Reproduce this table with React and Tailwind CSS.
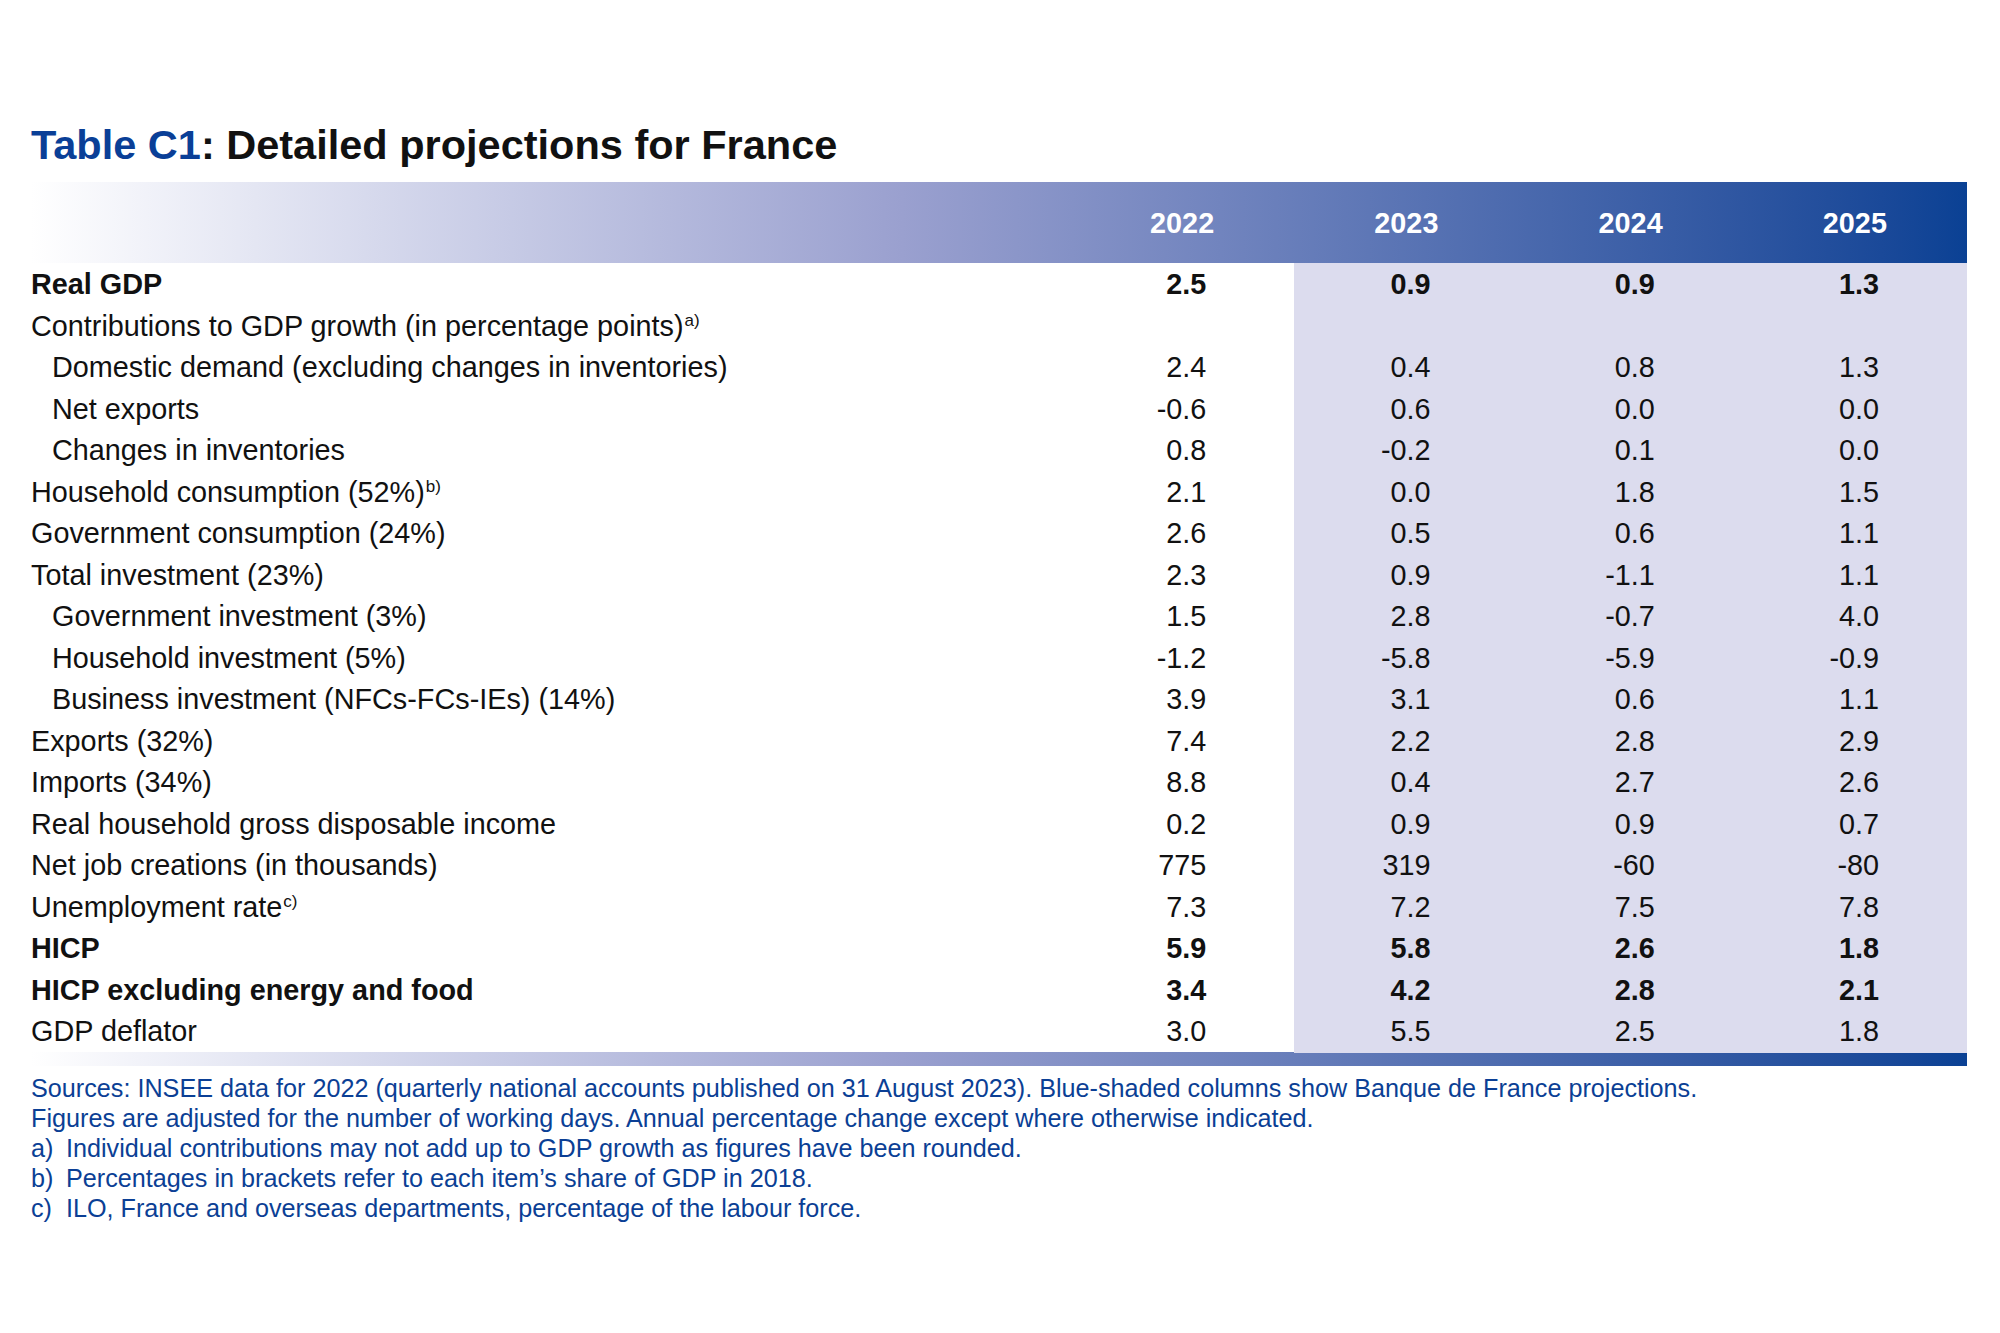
import React from 'react';

const rows = [
    { label: 'Real GDP', values: ['2.5', '0.9', '0.9', '1.3'], bold: true },
    { label: 'Contributions to GDP growth (in percentage points)', note: 'a)', values: ['', '', '', ''] },
    { label: 'Domestic demand (excluding changes in inventories)', values: ['2.4', '0.4', '0.8', '1.3'], indent: true },
    { label: 'Net exports', values: ['-0.6', '0.6', '0.0', '0.0'], indent: true },
    { label: 'Changes in inventories', values: ['0.8', '-0.2', '0.1', '0.0'], indent: true },
    { label: 'Household consumption (52%)', note: 'b)', values: ['2.1', '0.0', '1.8', '1.5'] },
    { label: 'Government consumption (24%)', values: ['2.6', '0.5', '0.6', '1.1'] },
    { label: 'Total investment (23%)', values: ['2.3', '0.9', '-1.1', '1.1'] },
    { label: 'Government investment (3%)', values: ['1.5', '2.8', '-0.7', '4.0'], indent: true },
    { label: 'Household investment (5%)', values: ['-1.2', '-5.8', '-5.9', '-0.9'], indent: true },
    { label: 'Business investment (NFCs-FCs-IEs) (14%)', values: ['3.9', '3.1', '0.6', '1.1'], indent: true },
    { label: 'Exports (32%)', values: ['7.4', '2.2', '2.8', '2.9'] },
    { label: 'Imports (34%)', values: ['8.8', '0.4', '2.7', '2.6'] },
    { label: 'Real household gross disposable income', values: ['0.2', '0.9', '0.9', '0.7'] },
    { label: 'Net job creations (in thousands)', values: ['775', '319', '-60', '-80'] },
    { label: 'Unemployment rate', note: 'c)', values: ['7.3', '7.2', '7.5', '7.8'] },
    { label: 'HICP', values: ['5.9', '5.8', '2.6', '1.8'], bold: true },
    { label: 'HICP excluding energy and food', values: ['3.4', '4.2', '2.8', '2.1'], bold: true },
    { label: 'GDP deflator', values: ['3.0', '5.5', '2.5', '1.8'] },
];

const years = ['2022', '2023', '2024', '2025'];

const notes = [
    { key: 'a)', text: 'Individual contributions may not add up to GDP growth as figures have been rounded.' },
    { key: 'b)', text: 'Percentages in brackets refer to each item\u2019s share of GDP in 2018.' },
    { key: 'c)', text: 'ILO, France and overseas departments, percentage of the labour force.' },
];

const band = 'bg-linear-to-r from-white via-[#9aa0cf] via-45% to-[#0a4194]';

export default function App() {
    return (
        <div className="w-[2000px] h-[1333px] bg-white pl-[31px] pt-[121px] text-[#111] font-['Liberation_Sans',Arial,sans-serif]">
            {/* Title */}
            <h1 className="text-[41.5px] leading-[48px] font-bold">
                <span className="text-[#0a3f97]">Table C1</span>: Detailed projections for France
            </h1>

            <div className="w-[1936px] mt-[13px]">
                {/* Header band */}
                <div className={`grid grid-cols-[1039px_repeat(4,1fr)] h-[81px] items-center pt-[2px] ${band}`}>
                    <div />
                    {years.map((y) => (
                        <div key={y} className="text-center text-white font-bold text-[28.8px]">
                            {y}
                        </div>
                    ))}
                </div>

                {/* Rows */}
                {rows.map((row) => (
                    <div
                        key={row.label}
                        className={`grid grid-cols-[1039px_repeat(4,1fr)] h-[41.5px] text-[28.8px] leading-[43px] ${row.bold ? 'font-bold' : ''}`}
                    >
                        <div className={`whitespace-nowrap ${row.indent ? 'pl-[21px]' : ''}`}>
                            {row.label}
                            {row.note && <sup className="text-[17px] font-normal -top-[10px] ml-[1px]">{row.note}</sup>}
                        </div>
                        {row.values.map((v, i) => (
                            <div key={i} className={`text-right pr-[88px] ${i > 0 ? 'bg-[#dcdcee]' : ''}`}>
                                {v}
                            </div>
                        ))}
                    </div>
                ))}

                {/* Bottom band */}
                <div className={`h-[14px] ${band}`} />
            </div>

            {/* Footer */}
            <div className="mt-[7px] text-[25.2px] leading-[30.2px] text-[#0b3f95]">
                <p>Sources: INSEE data for 2022 (quarterly national accounts published on 31 August 2023). Blue-shaded columns show Banque de France projections.</p>
                <p>Figures are adjusted for the number of working days. Annual percentage change except where otherwise indicated.</p>
                {notes.map((n) => (
                    <div key={n.key} className="flex">
                        <span className="w-[35px] shrink-0">{n.key}</span>
                        <span>{n.text}</span>
                    </div>
                ))}
            </div>
        </div>
    );
}
